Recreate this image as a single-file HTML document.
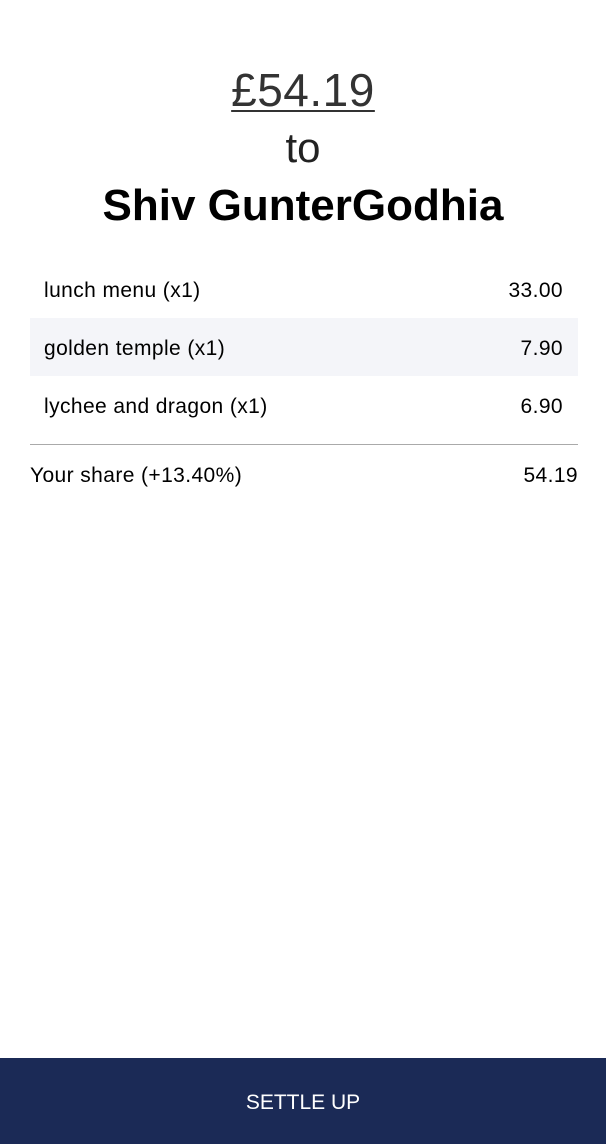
<!DOCTYPE html>
<html><head><style>
body{margin:0;width:606px;height:1144px;background:#fff;font-family:"Liberation Sans",sans-serif;color:#000;position:relative;overflow:hidden}
.c{position:absolute;left:0;width:606px;text-align:center}
.amt{top:62px;font-size:46px;font-weight:300;color:#333;line-height:56px;letter-spacing:0.5px}
.amt span{text-decoration:underline;text-decoration-thickness:2px;text-underline-offset:4px}
.to{top:124px;font-size:42px;color:#222;line-height:48px}
.nm{top:178px;font-size:44px;font-weight:bold;line-height:56px;letter-spacing:0px}
.row{position:absolute;left:30px;width:548px;height:58px;font-size:21px;line-height:62px;letter-spacing:0.4px}
.row .l{position:absolute;left:14px}.row .r{position:absolute;right:15px}
.hr{position:absolute;left:30px;width:548px;top:444px;border-top:1.5px solid #aaa}
.btn{position:absolute;left:0;top:1058px;width:606px;height:86px;background:#1b2a56;color:#fff;text-align:center;line-height:90px;font-size:21px}
</style></head><body>
<div class="c amt"><span>£54.19</span></div>
<div class="c to">to</div>
<div class="c nm">Shiv GunterGodhia</div>
<div class="row" style="top:260px"><span class="l">lunch menu (x1)</span><span class="r">33.00</span></div>
<div class="row" style="top:318px;background:#f4f5f9"><span class="l">golden temple (x1)</span><span class="r">7.90</span></div>
<div class="row" style="top:376px"><span class="l">lychee and dragon (x1)</span><span class="r">6.90</span></div>
<div class="hr"></div>
<div class="row" style="top:445px"><span class="l" style="left:0">Your share (+13.40%)</span><span class="r" style="right:0">54.19</span></div>
<div class="btn">SETTLE UP</div>
</body></html>
